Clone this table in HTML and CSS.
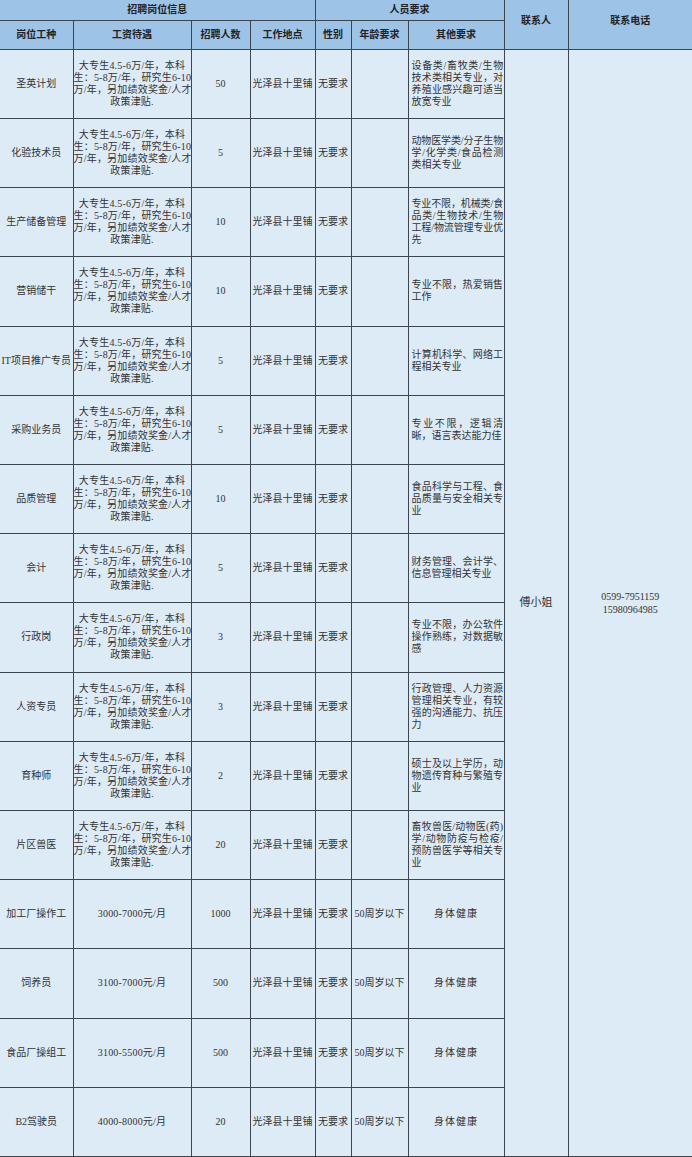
FILE: index.html
```html
<!DOCTYPE html>
<html lang="zh">
<head>
<meta charset="utf-8">
<title>招聘岗位信息</title>
<link rel="stylesheet" href="styles.css">
</head>
<body>
<table class="jobs">
  <colgroup>
    <col class="c1"><col class="c2"><col class="c3"><col class="c4"><col class="c5"><col class="c6"><col class="c7"><col class="c8"><col class="c9">
  </colgroup>
  <thead>
    <tr class="h1">
      <th colspan="4">招聘岗位信息</th>
      <th colspan="3">人员要求</th>
      <th rowspan="2" class="top">联系人</th>
      <th rowspan="2" class="top">联系电话</th>
    </tr>
    <tr class="h2">
      <th>岗位工种</th><th>工资待遇</th><th>招聘人数</th><th>工作地点</th><th>性别</th><th>年龄要求</th><th>其他要求</th>
    </tr>
  </thead>
  <tbody>
    <tr>
      <td>圣英计划</td>
      <td class="pay">大专生4.5-6万/年，本科<br>生：5-8万/年，研究生6-10<br>万/年，另加绩效奖金/人才<br>政策津贴.</td>
      <td>50</td><td>光泽县十里铺</td><td>无要求</td><td></td>
      <td class="req"><span>设备类/畜牧类/生物</span><span>技术类相关专业，对</span><span>养殖业感兴趣可适当</span><span class="end">放宽专业</span></td>
      <td rowspan="16" class="contact name">傅小姐</td>
      <td rowspan="16" class="contact">0599-7951159<br>15980964985</td>
    </tr>
    <tr>
      <td>化验技术员</td>
      <td class="pay">大专生4.5-6万/年，本科<br>生：5-8万/年，研究生6-10<br>万/年，另加绩效奖金/人才<br>政策津贴.</td>
      <td>5</td><td>光泽县十里铺</td><td>无要求</td><td></td>
      <td class="req"><span>动物医学类/分子生物</span><span>学/化学类/食品检测</span><span class="end">类相关专业</span></td>
    </tr>
    <tr>
      <td>生产储备管理</td>
      <td class="pay">大专生4.5-6万/年，本科<br>生：5-8万/年，研究生6-10<br>万/年，另加绩效奖金/人才<br>政策津贴.</td>
      <td>10</td><td>光泽县十里铺</td><td>无要求</td><td></td>
      <td class="req"><span>专业不限，机械类/食</span><span>品类/生物技术/生物</span><span>工程/物流管理专业优</span><span class="end">先</span></td>
    </tr>
    <tr class="tall">
      <td>营销储干</td>
      <td class="pay">大专生4.5-6万/年，本科<br>生：5-8万/年，研究生6-10<br>万/年，另加绩效奖金/人才<br>政策津贴.</td>
      <td>10</td><td>光泽县十里铺</td><td>无要求</td><td></td>
      <td class="req"><span>专业不限，热爱销售</span><span class="end">工作</span></td>
    </tr>
    <tr>
      <td>IT项目推广专员</td>
      <td class="pay">大专生4.5-6万/年，本科<br>生：5-8万/年，研究生6-10<br>万/年，另加绩效奖金/人才<br>政策津贴.</td>
      <td>5</td><td>光泽县十里铺</td><td>无要求</td><td></td>
      <td class="req"><span>计算机科学、网络工</span><span class="end">程相关专业</span></td>
    </tr>
    <tr>
      <td>采购业务员</td>
      <td class="pay">大专生4.5-6万/年，本科<br>生：5-8万/年，研究生6-10<br>万/年，另加绩效奖金/人才<br>政策津贴.</td>
      <td>5</td><td>光泽县十里铺</td><td>无要求</td><td></td>
      <td class="req"><span>专业不限，逻辑清</span><span class="end">晰，语言表达能力佳</span></td>
    </tr>
    <tr>
      <td>品质管理</td>
      <td class="pay">大专生4.5-6万/年，本科<br>生：5-8万/年，研究生6-10<br>万/年，另加绩效奖金/人才<br>政策津贴.</td>
      <td>10</td><td>光泽县十里铺</td><td>无要求</td><td></td>
      <td class="req"><span>食品科学与工程、食</span><span>品质量与安全相关专</span><span class="end">业</span></td>
    </tr>
    <tr>
      <td>会计</td>
      <td class="pay">大专生4.5-6万/年，本科<br>生：5-8万/年，研究生6-10<br>万/年，另加绩效奖金/人才<br>政策津贴.</td>
      <td>5</td><td>光泽县十里铺</td><td>无要求</td><td></td>
      <td class="req"><span>财务管理、会计学、</span><span class="end">信息管理相关专业</span></td>
    </tr>
    <tr class="tall">
      <td>行政岗</td>
      <td class="pay">大专生4.5-6万/年，本科<br>生：5-8万/年，研究生6-10<br>万/年，另加绩效奖金/人才<br>政策津贴.</td>
      <td>3</td><td>光泽县十里铺</td><td>无要求</td><td></td>
      <td class="req"><span>专业不限，办公软件</span><span>操作熟练，对数据敏</span><span class="end">感</span></td>
    </tr>
    <tr>
      <td>人资专员</td>
      <td class="pay">大专生4.5-6万/年，本科<br>生：5-8万/年，研究生6-10<br>万/年，另加绩效奖金/人才<br>政策津贴.</td>
      <td>3</td><td>光泽县十里铺</td><td>无要求</td><td></td>
      <td class="req"><span>行政管理、人力资源</span><span>管理相关专业，有较</span><span>强的沟通能力、抗压</span><span class="end">力</span></td>
    </tr>
    <tr>
      <td>育种师</td>
      <td class="pay">大专生4.5-6万/年，本科<br>生：5-8万/年，研究生6-10<br>万/年，另加绩效奖金/人才<br>政策津贴.</td>
      <td>2</td><td>光泽县十里铺</td><td>无要求</td><td></td>
      <td class="req"><span>硕士及以上学历，动</span><span>物遗传育种与繁殖专</span><span class="end">业</span></td>
    </tr>
    <tr>
      <td>片区兽医</td>
      <td class="pay">大专生4.5-6万/年，本科<br>生：5-8万/年，研究生6-10<br>万/年，另加绩效奖金/人才<br>政策津贴.</td>
      <td>20</td><td>光泽县十里铺</td><td>无要求</td><td></td>
      <td class="req"><span>畜牧兽医/动物医(药)</span><span>学/动物防疫与检疫/</span><span>预防兽医学等相关专</span><span class="end">业</span></td>
    </tr>
    <tr>
      <td>加工厂操作工</td>
      <td class="pay">3000-7000元/月</td>
      <td>1000</td><td>光泽县十里铺</td><td>无要求</td><td>50周岁以下</td>
      <td class="health">身体健康</td>
    </tr>
    <tr class="tall">
      <td>饲养员</td>
      <td class="pay">3100-7000元/月</td>
      <td>500</td><td>光泽县十里铺</td><td>无要求</td><td>50周岁以下</td>
      <td class="health">身体健康</td>
    </tr>
    <tr>
      <td>食品厂操组工</td>
      <td class="pay">3100-5500元/月</td>
      <td>500</td><td>光泽县十里铺</td><td>无要求</td><td>50周岁以下</td>
      <td class="health">身体健康</td>
    </tr>
    <tr>
      <td>B2驾驶员</td>
      <td class="pay">4000-8000元/月</td>
      <td>20</td><td>光泽县十里铺</td><td>无要求</td><td>50周岁以下</td>
      <td class="health">身体健康</td>
    </tr>
  </tbody>
</table>
</body>
</html>
```

FILE: styles.css
```css
html, body {
  margin: 0;
  padding: 0;
  background: #ddebf7;
}

.jobs {
  width: 692px;
  table-layout: fixed;
  border-collapse: collapse;
  font-family: "Liberation Serif", "Noto Sans CJK SC", serif;
  font-size: 10px;
  line-height: 12px;
  color: #333;
  background: #ddebf7;
}

.c1 { width: 73px; }
.c2 { width: 118px; }
.c3 { width: 59px; }
.c4 { width: 65px; }
.c5 { width: 36px; }
.c6 { width: 57px; }
.c7 { width: 96px; }
.c8 { width: 64px; }
.c9 { width: 124px; }

.jobs th,
.jobs td {
  border: 1px solid #3d4650;
  padding: 0;
  text-align: center;
  vertical-align: middle;
  overflow: hidden;
  white-space: nowrap;
}

.jobs tr > :first-child { border-left: none; }
.jobs tr > :last-child { border-right: none; }
.jobs thead tr.h1 > * { border-top: none; }

.jobs th {
  background: #9dc3e6;
  font-weight: bold;
  color: #222;
}

.h1 { height: 20px; }
.h2 { height: 29px; }
.jobs th.top { padding-bottom: 6px; }

.jobs tbody tr { height: 69px; }
.jobs tbody tr.tall { height: 70px; }

.jobs td.pay {
  letter-spacing: 0.2px;
}

.jobs td.req {
  text-align: left;
  padding: 0 1px 0 3px;
}

.req span {
  display: block;
  text-align: justify;
  text-align-last: justify;
  letter-spacing: -0.6px;
}

.req span.end {
  text-align-last: left;
  letter-spacing: 0;
}

.jobs td.health {
  letter-spacing: 1px;
}

.jobs td.contact {
  font-size: 10px;
  line-height: 13px;
}

.jobs td.contact.name {
  font-size: 11px;
}
```
